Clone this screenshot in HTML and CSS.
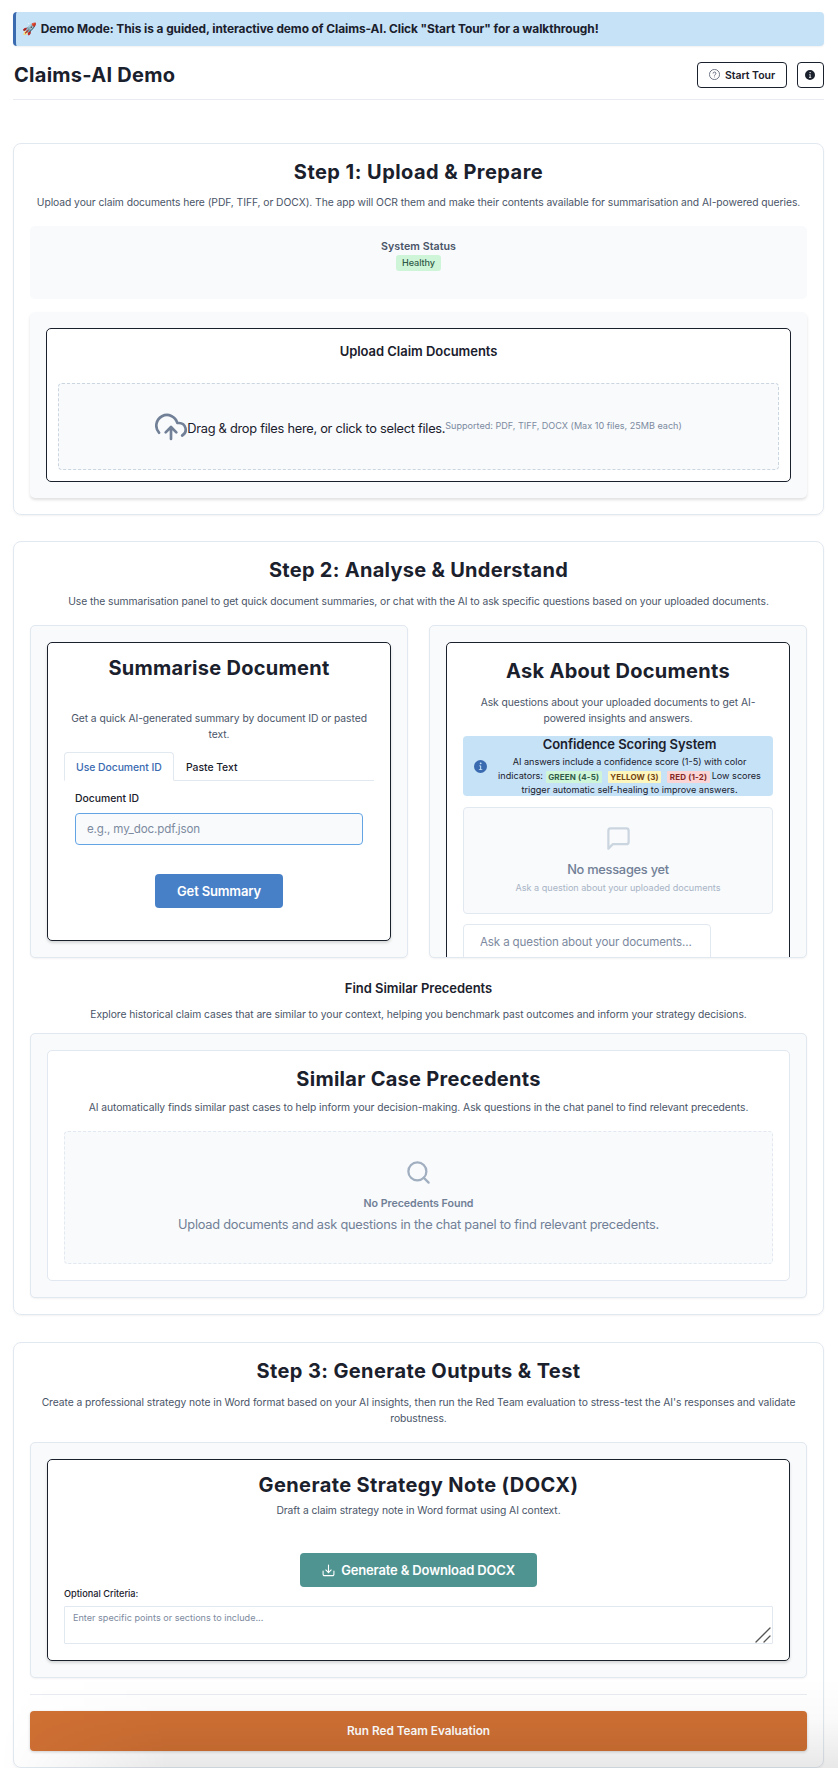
FILE: index.html
```html
<!DOCTYPE html>
<html lang="en">
<head>
<meta charset="utf-8">
<title>Claims-AI Demo</title>
<link rel="stylesheet" href="styles.css">
</head>
<body>
<div class="banner"><span class="rocket">🚀</span> Demo Mode: This is a guided, interactive demo of Claims-AI. Click "Start Tour" for a walkthrough!</div>
<header class="header">
  <h1 class="heading heading-page">Claims-AI Demo</h1>
  <div class="actions">
    <button class="btn-outline btn-tour">
      <svg width="11" height="11" viewBox="0 0 10 10" fill="none" stroke="currentColor" stroke-width=".7"><circle cx="5" cy="5" r="4.6"/><path d="M3.7 4.1a1.3 1.3 0 1 1 1.9 1.1c-.4.25-.6.45-.6.9"/><path d="M5 6.9v.7"/></svg>
      <span>Start Tour</span>
    </button>
    <button class="btn-outline btn-info" aria-label="Info">
      <svg width="10" height="10" viewBox="0 0 24 24" fill="currentColor"><path d="M12 0a12 12 0 1 0 0 24a12 12 0 0 0 0-24zm.3 4.5a1.7 1.7 0 1 1 0 3.4a1.7 1.7 0 0 1 0-3.4zm2.7 14H9.6v-1.6h1.6v-5.300H9.900V10h3.400v6.900H15z"/></svg>
    </button>
  </div>
</header>

<main class="steps">
  <section class="card">
    <h2 class="heading heading-step1">Step 1: Upload &amp; Prepare</h2>
    <p class="body intro-first">Upload your claim documents here (PDF, TIFF, or DOCX). The app will OCR them and make their contents available for summarisation and AI-powered queries.</p>
    <div class="status">
      <div class="status-title">System Status</div>
      <span class="healthy">Healthy</span>
    </div>
    <div class="upload">
      <div class="panel upload-panel">
        <h3 class="subheading">Upload Claim Documents</h3>
        <div class="dropzone">
          <svg class="cloud" width="32" height="32" viewBox="0 0 24 24" fill="none" stroke="currentColor" stroke-width="2" stroke-linecap="round" stroke-linejoin="round"><path d="M16 16l-4-4-4 4M12 12v9"/><path d="M20.390 18.390A5 5 0 0 0 18 9h-1.260A8 8 0 1 0 3 16.300"/></svg>
          <span class="drop-text">Drag &amp; drop files here, or click to select files.</span>
          <span class="drop-hint">Supported: PDF, TIFF, DOCX (Max 10 files, 25MB each)</span>
        </div>
      </div>
    </div>
  </section>

  <section class="card">
    <h2 class="heading">Step 2: Analyse &amp; Understand</h2>
    <p class="body intro">Use the summarisation panel to get quick document summaries, or chat with the AI to ask specific questions based on your uploaded documents.</p>
    <div class="columns">
      <div class="well column">
        <div class="panel summary-panel">
          <h2 class="heading">Summarise Document</h2>
          <p class="body summary-text">Get a quick AI-generated summary by document ID or pasted<br>text.</p>
          <div class="tabs"><span class="tab tab-active">Use Document ID</span><span class="tab">Paste Text</span></div>
          <div class="tab-body">
            <label class="label" for="doc">Document ID</label>
            <input class="doc-input" id="doc" placeholder="e.g., my_doc.pdf.json">
          </div>
          <button class="btn btn-blue">Get Summary</button>
        </div>
      </div>
      <div class="well column">
        <div class="panel chat-panel">
          <h2 class="heading">Ask About Documents</h2>
          <p class="body chat-text">Ask questions about your uploaded documents to get AI-<br>powered insights and answers.</p>
          <div class="alert">
            <svg width="13" height="13" viewBox="0 0 24 24" fill="#3a6ab0"><path d="M12 0a12 12 0 1 0 0 24a12 12 0 0 0 0-24zm.3 4.500a1.700 1.700 0 1 1 0 3.400a1.700 1.700 0 0 1 0-3.400zm3 14H9v-1.500h2.300v-5.500H9.500V10h3.700v7h2.100z"/></svg>
            <div class="alert-content">
              <div class="alert-title">Confidence Scoring System</div>
              <div class="alert-text">AI answers include a confidence score (1-5) with color<br>indicators: <span class="tag green">GREEN (4-5)</span><span class="tag yellow">YELLOW (3)</span><span class="tag red">RED (1-2)</span>Low scores<br>trigger automatic self-healing to improve answers.</div>
            </div>
          </div>
          <div class="messages">
            <svg width="27" height="27" viewBox="0 0 24 24" fill="none" stroke="currentColor" stroke-width="2" stroke-linecap="round" stroke-linejoin="round"><path d="M21 15a2 2 0 0 1-2 2H7l-4 4V5a2 2 0 0 1 2-2h14a2 2 0 0 1 2 2z"/></svg>
            <div class="messages-title">No messages yet</div>
            <div class="messages-sub">Ask a question about your uploaded documents</div>
          </div>
          <input class="chat-input" placeholder="Ask a question about your documents...">
        </div>
      </div>
    </div>
    <h3 class="subheading find-title">Find Similar Precedents</h3>
    <p class="body find-text">Explore historical claim cases that are similar to your context, helping you benchmark past outcomes and inform your strategy decisions.</p>
    <div class="well precedents">
      <div class="panel panel-light">
        <h2 class="heading">Similar Case Precedents</h2>
        <p class="body cases-text">AI automatically finds similar past cases to help inform your decision-making. Ask questions in the chat panel to find relevant precedents.</p>
        <div class="empty">
          <svg width="27" height="27" viewBox="0 0 24 24" fill="none" stroke="#a0aec0" stroke-width="2" stroke-linecap="round"><circle cx="11" cy="11" r="8"/><path d="M21 21l-4.350-4.350"/></svg>
          <div class="empty-title">No Precedents Found</div>
          <div class="empty-text">Upload documents and ask questions in the chat panel to find relevant precedents.</div>
        </div>
      </div>
    </div>
  </section>

  <section class="card card-outputs">
    <h2 class="heading heading-wide">Step 3: Generate Outputs &amp; Test</h2>
    <p class="body intro">Create a professional strategy note in Word format based on your AI insights, then run the Red Team evaluation to stress-test the AI's responses and validate<br>robustness.</p>
    <div class="well note">
      <div class="panel note-panel">
        <h2 class="heading heading-wide">Generate Strategy Note (DOCX)</h2>
        <p class="body note-text">Draft a claim strategy note in Word format using AI context.</p>
        <button class="btn btn-teal">
          <svg width="13" height="13" viewBox="0 0 24 24" fill="none" stroke="currentColor" stroke-width="2" stroke-linecap="round" stroke-linejoin="round"><path d="M22 13v6a2.500 2.500 0 0 1-2.500 2.500h-15A2.500 2.500 0 0 1 2 19v-6M7 11l5 5 5-5M12 16V2"/></svg>
          <span>Generate &amp; Download DOCX</span>
        </button>
        <label class="label-small" for="criteria">Optional Criteria:</label>
        <div class="criteria">
          <textarea class="criteria-input" id="criteria" placeholder="Enter specific points or sections to include..."></textarea>
          <svg class="grip" width="16" height="16" viewBox="0 0 16 16" stroke="#555" stroke-width="1.300" stroke-linecap="round"><path d="M1 15L15 1M9 15l6-6"/></svg>
        </div>
      </div>
    </div>
    <hr class="divider">
    <button class="btn-run">Run Red Team Evaluation</button>
  </section>
</main>
<div class="fade"></div>
</body>
</html>
```
FILE: styles.css
```css
* { box-sizing: border-box; }
body {
  margin: 0;
  padding: 12px 14px 0 13px;
  height: 1768px;
  overflow: hidden;
  position: relative;
  background: #fff;
  color: #1a202c;
  font-family: Inter, sans-serif;
  white-space: nowrap;
}
h1, h2, h3, p { margin: 0; }
button, input, textarea { font-family: inherit; margin: 0; color: inherit; }
svg { display: block; flex: none; }

.banner {
  height: 34px;
  padding-left: 6px;
  border-left: 3px solid #3a6ab0;
  border-radius: 4px;
  background: #c6e2f7;
  box-shadow: 0 1px 2px rgba(0, 0, 0, .06);
  font-size: 11.9px;
  font-weight: 700;
  line-height: 33px;
  letter-spacing: -.065px;
}
.rocket { margin-right: 1px; }
.header {
  display: flex;
  align-items: center;
  justify-content: space-between;
  height: 54px;
  padding-top: 4px;
  border-bottom: 1px solid #e8ebf0;
}
.actions { display: flex; gap: 10px; }
.btn-outline {
  display: flex;
  align-items: center;
  justify-content: center;
  gap: 5px;
  height: 26px;
  padding: 0;
  border: 1px solid #1a202c;
  border-radius: 4px;
  background: #fff;
  font-size: 10.5px;
  font-weight: 600;
  letter-spacing: -.03px;
}
.btn-tour { width: 90px; }
.btn-info { width: 27px; }
.btn-info svg { margin-right: 1px; }
.btn-tour svg { color: #4a5568; }
.btn-tour span { padding-top: 1px; }

.heading {
  font-size: 20px;
  font-weight: 700;
  line-height: 26px;
  letter-spacing: .28px;
  text-align: center;
}
.heading-page { padding-left: 1px; letter-spacing: .27px; }
.heading-step1 { letter-spacing: .46px; }
.heading-wide { letter-spacing: .38px; }
.body {
  color: #4a5568;
  font-size: 10.3px;
  line-height: 16px;
  letter-spacing: -.057px;
  text-align: center;
}
.subheading {
  font-size: 13px;
  font-weight: 600;
  line-height: 20px;
  letter-spacing: -.04px;
  text-align: center;
}

.steps { display: flex; flex-direction: column; gap: 26px; padding-top: 43px; }
.card {
  padding: 15px 16px 16px;
  border: 1px solid #e2e8f0;
  border-radius: 8px;
  box-shadow: 0 1px 2px rgba(0, 0, 0, .05);
}
.card-outputs { margin-top: 1px; }
.intro-first { margin-top: 9px; }
.intro { margin-top: 10px; }

.status {
  display: flex;
  flex-direction: column;
  align-items: center;
  height: 73px;
  margin-top: 16px;
  padding-top: 13px;
  border-radius: 5px;
  background: #f8fafc;
}
.status-title { color: #4a5568; font-size: 10.67px; font-weight: 600; line-height: 16px; letter-spacing: .05px; }
.healthy {
  width: 45px;
  height: 16px;
  border-radius: 3px;
  background: #cff5d8;
  color: #2f5a48;
  font-size: 9.1px;
  font-weight: 500;
  line-height: 15.500px;
  letter-spacing: -.07px;
  text-align: center;
}
.upload {
  height: 186px;
  margin-top: 13px;
  padding: 16px;
  border-radius: 5px;
  background: #f8fafc;
  box-shadow: 0 2px 3px rgba(0, 0, 0, .12);
}
.panel { border: 1px solid #1a202c; border-radius: 5px; background: #fff; }
.upload-panel { height: 154px; padding: 12px 11px 0; }
.dropzone {
  display: flex;
  align-items: center;
  justify-content: center;
  height: 87px;
  margin-top: 22px;
  border: 1px dashed #cbd5e0;
  border-radius: 4px;
  background: #f8fafc;
}
.cloud { color: #718096; }
.drop-text { font-size: 12.8px; line-height: 20px; letter-spacing: -.26px; padding-top: 5px; }
.drop-hint { color: #7d8aa0; font-size: 9.1px; line-height: 14px; letter-spacing: -.01px; padding-bottom: 2px; }

.columns { display: grid; grid-template-columns: 378px 378px; justify-content: space-between; margin-top: 16px; }
.well {
  padding: 16px;
  border: 1px solid #e2e8f0;
  border-radius: 5px;
  background: #f8fafc;
  box-shadow: 0 1px 2px rgba(0, 0, 0, .05);
}
.column { height: 333px; overflow: hidden; }
.summary-panel {
  display: flex;
  flex-direction: column;
  height: 299px;
  padding: 12px 16px 0;
  box-shadow: 0 2px 3px rgba(0, 0, 0, .14);
}
.summary-text { margin-top: 29px; }
.tabs { display: flex; height: 29px; margin-top: 10px; border-bottom: 1px solid #e2e8f0; }
.tab { padding: 0 12px; font-size: 10.4px; font-weight: 500; line-height: 31px; letter-spacing: -.04px; }
.tab-active {
  width: 110px;
  height: 29px;
  padding: 0 0 0 11px;
  border: 1px solid #e2e8f0;
  border-bottom-color: #fff;
  border-radius: 4px 4px 0 0;
  color: #3a6ab0;
  line-height: 29px;
}
.tab-body { display: flex; flex-direction: column; padding: 10px 11px 0; }
.label { font-size: 10.4px; font-weight: 500; line-height: 16px; letter-spacing: -.02px; }
.doc-input {
  height: 32px;
  margin-top: 6px;
  padding: 0 0 1px 11px;
  border: 1px solid #63a4e4;
  border-radius: 4px;
  background: #f8fafc;
  font-size: 11.6px;
  letter-spacing: -.14px;
}
::placeholder { color: #7d8aa0; opacity: 1; }
.btn {
  display: flex;
  align-items: center;
  justify-content: center;
  height: 34px;
  padding: 0;
  border: 0;
  border-radius: 4px;
  color: #fff;
  font-size: 13px;
  font-weight: 600;
  letter-spacing: -.15px;
}
.btn-blue { align-self: center; width: 128px; margin-top: 29px; background: #4880c8; }

.chat-panel { height: 380px; padding: 15px 16px 0; }
.chat-text { margin-top: 10px; }
.alert {
  display: flex;
  align-items: center;
  gap: 10px;
  height: 60px;
  margin-top: 10px;
  padding: 0 11px;
  border-radius: 4px;
  background: #c6e2f7;
}
.alert-content { flex: 1; text-align: center; }
.alert-title { font-size: 13px; font-weight: 600; line-height: 17px; letter-spacing: -.07px; }
.alert-text { padding-top: 2px; font-size: 9.1px; line-height: 14px; letter-spacing: 0; }
.tag {
  display: inline-block;
  height: 12px;
  padding: 0 2.600px;
  border-radius: 1px;
  font-size: 8px;
  font-weight: 700;
  line-height: 12px;
  letter-spacing: .15px;
  vertical-align: -1px;
}
.green { margin-right: 6px; background: #cff5d8; color: #2f5a48; }
.yellow { margin-right: 6px; background: #fdf7bd; color: #744210; }
.red { margin-right: 2px; background: #fbd5d5; color: #822727; }
.messages {
  display: flex;
  flex-direction: column;
  align-items: center;
  height: 107px;
  margin-top: 11px;
  padding-top: 17px;
  border: 1px solid #e2e8f0;
  border-radius: 4px;
  background: #f8fafc;
  color: #cbd5e0;
}
.messages-title { margin-top: 8px; color: #718096; font-size: 12.8px; font-weight: 500; line-height: 20px; letter-spacing: -.25px; }
.messages-sub { margin-top: 1px; color: #a8b4c5; font-size: 9.1px; line-height: 14px; letter-spacing: -.01px; }
.chat-input {
  width: 248px;
  height: 43px;
  margin-top: 10px;
  padding: 0 0 8px 16px;
  border: 1px solid #e2e8f0;
  border-radius: 4px;
  background: #fff;
  font-size: 11.6px;
  letter-spacing: -.15px;
}

.find-title { margin-top: 20px; }
.find-text { margin-top: 8px; }
.precedents { margin-top: 11px; }
.panel-light { height: 231px; padding: 15px 16px 0; border-color: #e2e8f0; }
.cases-text { margin-top: 7px; }
.empty {
  display: flex;
  flex-direction: column;
  align-items: center;
  height: 133px;
  margin-top: 16px;
  padding-top: 27px;
  border: 1px dashed #e2e8f0;
  border-radius: 4px;
  background: #f8fafc;
  color: #718096;
}
.empty-title { margin-top: 10px; font-size: 10.67px; font-weight: 600; line-height: 16px; letter-spacing: -.04px; }
.empty-text { margin-top: 3px; font-size: 12.8px; line-height: 20px; letter-spacing: -.25px; }

.note { margin-top: 16px; }
.note-panel { height: 202px; padding: 12px 16px 0; box-shadow: 0 2px 3px rgba(0, 0, 0, .14); }
.note-text { margin-top: 4px; }
.btn-teal { gap: 6px; width: 237px; margin: 35px auto 0; background: #509492; }
.label-small { display: block; font-size: 9.200px; font-weight: 500; line-height: 14px; }
.criteria { position: relative; margin-top: 5px; }
.criteria-input {
  display: block;
  width: 100%;
  height: 38px;
  padding: 4px 8px;
  border: 1px solid #e2e8f0;
  border-radius: 1px;
  background: #fff;
  font-size: 9.1px;
  line-height: 14px;
  resize: none;
}
.grip { position: absolute; right: 2px; bottom: 1px; }
.divider { height: 1px; margin: 16px 0; border: 0; background: #e8ebf0; }
.btn-run {
  display: block;
  width: 100%;
  height: 40px;
  padding: 0 0 1px;
  border: 0;
  border-radius: 4px;
  background: #cf7034;
  box-shadow: 0 1px 3px rgba(0, 0, 0, .18);
  color: #fff;
  font-size: 11.8px;
  font-weight: 600;
  letter-spacing: -.03px;
}
.fade {
  position: absolute;
  left: 0;
  right: 0;
  bottom: 0;
  height: 90px;
  background: linear-gradient(rgba(0, 0, 0, 0), rgba(0, 0, 0, .02) 45%, rgba(0, 0, 0, .09));
  -webkit-mask-image: linear-gradient(90deg, transparent, #000 20%);
  mask-image: linear-gradient(90deg, transparent, #000 20%);
  pointer-events: none;
}
```
